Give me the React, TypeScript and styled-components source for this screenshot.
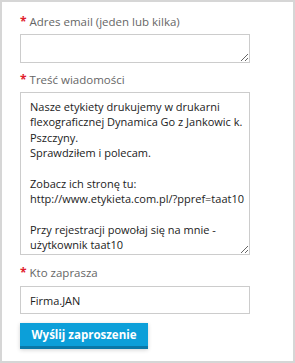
import styled, { createGlobalStyle } from "styled-components";

const GlobalStyle = createGlobalStyle`
  html, body {
    margin: 0;
    padding: 0;
    background: #ffffff;
  }
  body {
    font-family: "Open Sans", "Liberation Sans", sans-serif;
  }
`;

const Panel = styled.form`
  box-sizing: border-box;
  width: 295px;
  height: 363px;
  border: 2px solid #d6d6d6;
  background: #ffffff;
  padding: 12px 18px 0 18px;
  display: flex;
  flex-direction: column;
`;

const Field = styled.div<{ $gap?: number; $top?: number }>`
  display: flex;
  flex-direction: column;
  gap: ${(p) => p.$gap ?? 4}px;
  margin-top: ${(p) => p.$top ?? 0}px;
  margin-bottom: 9px;
`;

const Label = styled.label`
  font-size: 11.5px;
  line-height: 16px;
  color: #666666;
  display: flex;
  align-items: center;
`;

const Star = styled.span`
  color: #e0202c;
  font-weight: 700;
  font-size: 12px;
  margin-right: 3px;
`;

const Area = styled.textarea<{ $h: number }>`
  box-sizing: border-box;
  width: 230px;
  height: ${(p) => p.$h}px;
  border: 1px solid #cccccc;
  border-radius: 0;
  padding: 6px 3px 6px 9px;
  margin: 0;
  font-family: "Open Sans", "Liberation Sans", sans-serif;
  font-size: 11px;
  line-height: 15.35px;
  color: #222222;
  resize: both;
  overflow: hidden;
  outline: none;
`;

const Input = styled.input`
  box-sizing: border-box;
  width: 230px;
  height: 28px;
  border: 1px solid #cccccc;
  border-radius: 0;
  padding: 0 9px;
  margin: 0;
  font-family: "Open Sans", "Liberation Sans", sans-serif;
  font-size: 11px;
  color: #222222;
  outline: none;
`;

const Button = styled.button`
  box-sizing: border-box;
  align-self: flex-start;
  margin-top: 0;
  width: 128px;
  height: 26px;
  border: none;
  border-bottom: 3px solid #0a78a8;
  background: #0c9fd9;
  color: #ffffff;
  font-family: "Open Sans", "Liberation Sans", sans-serif;
  font-weight: 700;
  font-size: 11.5px;
  padding: 0;
  box-shadow: 0 1px 4px rgba(0, 0, 0, 0.18);
  cursor: pointer;
`;

const message = `Nasze etykiety drukujemy w drukarni flexograficznej Dynamica Go z Jankowic k. Pszczyny.
Sprawdziłem i polecam.

Zobacz ich stronę tu:
http://www.etykieta.com.pl/?ppref=taat10

Przy rejestracji powołaj się na mnie - użytkownik taat10`;

export default function App() {
  return (
    <>
      <GlobalStyle />
      <Panel onSubmit={(e) => e.preventDefault()}>
        <Field>
          <Label>
            <Star>*</Star>Adres email (jeden lub kilka)
          </Label>
          <Area $h={29} defaultValue="" />
        </Field>
        <Field>
          <Label>
            <Star>*</Star>Treść wiadomości
          </Label>
          <Area $h={163} defaultValue={message} />
        </Field>
        <Field $gap={5} $top={1}>
          <Label>
            <Star>*</Star>Kto zaprasza
          </Label>
          <Input defaultValue="Firma.JAN" />
        </Field>
        <Button type="submit">Wyślij zaproszenie</Button>
      </Panel>
    </>
  );
}
